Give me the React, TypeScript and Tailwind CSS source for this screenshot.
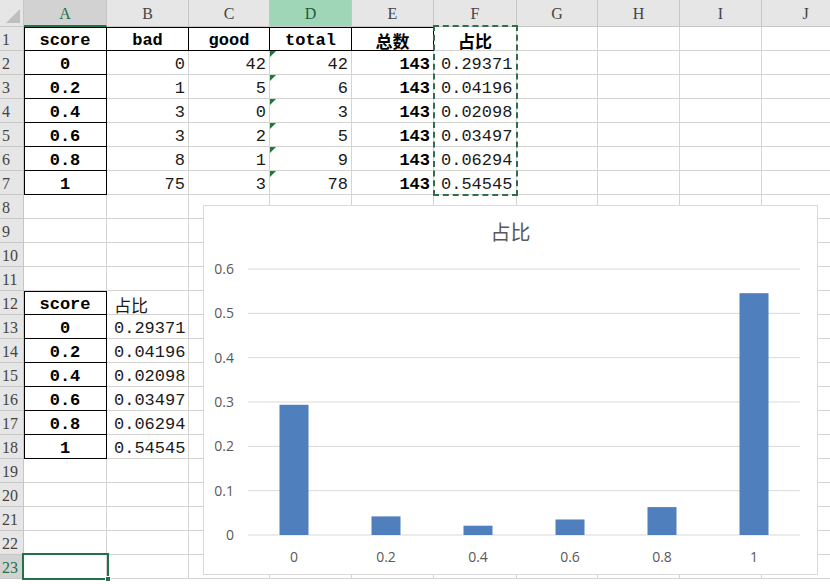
import React from "react";

type Cell = {
  v?: string;
  align?: "l" | "c" | "r";
  bold?: boolean;
  cjk?: boolean;
  frame?: "a" | "aTop" | "top";
  flag?: boolean;
};

const COLS = ["A", "B", "C", "D", "E", "F", "G", "H", "I", "J"];
const colW = [
  "w-[83px]",
  "w-[82px]",
  "w-[81px]",
  "w-[82px]",
  "w-[82px]",
  "w-[83px]",
  "w-[81px]",
  "w-[82px]",
  "w-[82px]",
  "w-[88px]",
];

const scores = ["0", "0.2", "0.4", "0.6", "0.8", "1"];
const bad = ["0", "1", "3", "3", "8", "75"];
const good = ["42", "5", "0", "2", "1", "3"];
const total = ["42", "6", "3", "5", "9", "78"];
const ratio = ["0.29371", "0.04196", "0.02098", "0.03497", "0.06294", "0.54545"];
const ratioNum = [0.29371, 0.04196, 0.02098, 0.03497, 0.06294, 0.54545];

function buildSheet() {
  const s: Record<number, Record<number, Cell>> = {};
  const put = (r: number, c: number, cell: Cell) => {
    s[r] = s[r] || {};
    s[r][c] = cell;
  };
  // top table
  put(1, 0, { v: "score", align: "c", bold: true, frame: "aTop" });
  put(1, 1, { v: "bad", align: "c", bold: true, frame: "top" });
  put(1, 2, { v: "good", align: "c", bold: true, frame: "top" });
  put(1, 3, { v: "total", align: "c", bold: true, frame: "top" });
  put(1, 4, { v: "总数", align: "c", bold: true, cjk: true, frame: "top" });
  put(1, 5, { v: "占比", align: "c", bold: true, cjk: true });
  scores.forEach((sc, i) => {
    const r = i + 2;
    put(r, 0, { v: sc, align: "c", bold: true, frame: "a" });
    put(r, 1, { v: bad[i], align: "r" });
    put(r, 2, { v: good[i], align: "r" });
    put(r, 3, { v: total[i], align: "r", flag: true });
    put(r, 4, { v: "143", align: "r", bold: true });
    put(r, 5, { v: ratio[i], align: "l" });
  });
  // bottom table
  put(12, 0, { v: "score", align: "c", bold: true, frame: "aTop" });
  put(12, 1, { v: "占比", align: "l", cjk: true });
  scores.forEach((sc, i) => {
    const r = i + 13;
    put(r, 0, { v: sc, align: "c", bold: true, frame: "a" });
    put(r, 1, { v: ratio[i], align: "l" });
  });
  return s;
}

const sheet = buildSheet();

function SheetCell({ cell, col }: { cell?: Cell; col: number }) {
  const framed = cell?.frame;
  let border = "border-r border-b border-[#d4d4d4]";
  if (framed === "a") border = "border-r border-b border-black shadow-[inset_1px_0_0_#000]";
  if (framed === "aTop") border = "border-r border-b border-black shadow-[inset_1px_1px_0_#000]";
  if (framed === "top") border = "border-r border-b border-black shadow-[inset_0_1px_0_#000]";
  const align =
    cell?.align === "c" ? "justify-center" : cell?.align === "r" ? "justify-end pr-[3px]" : "justify-start pl-[7px]";
  return (
    <div className={`relative flex h-full shrink-0 items-center pt-[4px] ${colW[col]} ${border} ${align}`}>
      {cell?.flag && (
        <span className="absolute left-0 top-0 h-0 w-0 border-t-[6px] border-r-[6px] border-t-[#1f7a3a] border-r-transparent" />
      )}
      {cell?.v && (
        <span
          className={`whitespace-nowrap leading-none ${cell.bold ? "font-bold text-black" : "font-normal text-[#1a1a1a]"} ${
            cell.cjk
              ? "font-['Noto_Sans_CJK_SC',sans-serif] text-[17px]"
              : "font-['Liberation_Mono','Noto_Sans_CJK_SC',monospace] text-[17px]"
          }`}
        >
          {cell.v}
        </span>
      )}
    </div>
  );
}

function Chart() {
  const zeroY = 329;
  const step = 44.33;
  const centers = [90, 182, 274, 366, 458, 550];
  const cats = ["0", "0.2", "0.4", "0.6", "0.8", "1"];
  return (
    <div className="absolute left-[203px] top-[205px] z-10 h-[370px] w-[615px] border border-[#d9d9d9] bg-white">
      <div className="pt-[12px] text-center font-['Noto_Sans_CJK_SC',sans-serif] text-[20px] leading-[28px] text-[#595959]">
        占比
      </div>
      <svg className="absolute left-0 top-0" width="613" height="368" viewBox="0 0 613 368">
        {[0, 1, 2, 3, 4, 5, 6].map((i) => {
          const y = zeroY - i * step;
          return (
            <g key={i}>
              <line x1="44" x2="596" y1={y} y2={y} stroke="#d9d9d9" strokeWidth="1" />
              <text
                x="30"
                y={y + 5}
                textAnchor="end"
                fontFamily="'Open Sans', 'Liberation Sans', sans-serif"
                fontSize="14"
                fill="#595959"
              >
                {i === 0 ? "0" : (i / 10).toFixed(1)}
              </text>
            </g>
          );
        })}
        {ratioNum.map((v, i) => {
          const h = (v / 0.1) * step;
          return <rect key={i} x={centers[i] - 14.5} y={zeroY - h} width="29" height={h} fill="#4f7fbd" />;
        })}
        {cats.map((c, i) => (
          <text
            key={c}
            x={centers[i]}
            y="356"
            textAnchor="middle"
            fontFamily="'Open Sans', 'Liberation Sans', sans-serif"
            fontSize="14"
            fill="#595959"
          >
            {c}
          </text>
        ))}
      </svg>
    </div>
  );
}

export default function App() {
  const rows = Array.from({ length: 23 }, (_, i) => i + 1);
  return (
    <div className="relative h-[584px] w-[830px] overflow-hidden bg-white font-['Liberation_Serif',serif]">
      {/* column headers */}
      <div className="flex h-[27px]">
        <div className="relative h-full w-[24px] shrink-0 border-r border-b border-[#c6c6c6] bg-[#e6e6e6]">
          <span className="absolute bottom-[3px] right-[3px] h-0 w-0 border-b-[14px] border-l-[14px] border-b-[#bfbfbf] border-l-transparent" />
        </div>
        {COLS.map((c, i) => {
          let cls = "border-b border-[#c6c6c6] bg-[#e6e6e6] text-[#444]";
          if (c === "A") cls = "border-b-2 border-b-[#217346] bg-[#d2d2d2] text-[#217346]";
          if (c === "D") cls = "border-b border-b-[#c6c6c6] bg-[#a0d6b8] text-[#1e5c3a]";
          return (
            <div
              key={c}
              className={`flex h-full shrink-0 items-center justify-center border-r border-r-[#c6c6c6] pt-[2px] text-[16px] ${colW[i]} ${cls}`}
            >
              {c}
            </div>
          );
        })}
      </div>
      {/* rows */}
      {rows.map((r) => (
        <div key={r} className="flex h-[24px]">
          <div
            className={`flex h-full w-[24px] shrink-0 items-center pl-[2px] pt-[3px] text-[16px] ${
              r === 23
                ? "border-r-2 border-b border-r-[#217346] border-b-[#c6c6c6] bg-[#d2d2d2] text-[#217346]"
                : "border-r border-b border-[#c6c6c6] bg-[#e6e6e6] text-[#444]"
            }`}
          >
            {r}
          </div>
          {COLS.map((_, ci) => (
            <SheetCell key={ci} col={ci} cell={sheet[r]?.[ci]} />
          ))}
        </div>
      ))}

      {/* copy marquee on F1:F7 */}
      <div className="pointer-events-none absolute left-[433px] top-[25px] h-[171px] w-[85px] border-2 border-dashed border-[#2f6f4c]" />

      {/* active cell A23 */}
      <div className="pointer-events-none absolute left-[22px] top-[553px] h-[27px] w-[87px] border-2 border-[#217346]">
        <span className="absolute -bottom-[4px] -right-[4px] h-[6px] w-[6px] border border-white bg-[#217346]" />
      </div>

      <Chart />
    </div>
  );
}
